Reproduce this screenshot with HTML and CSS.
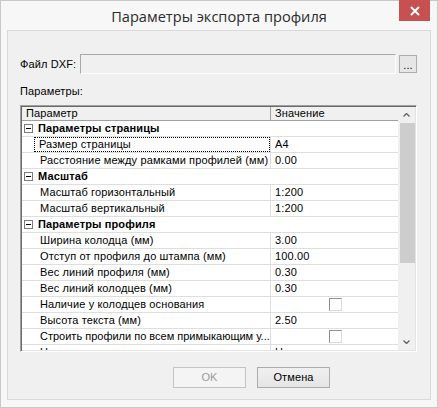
FILE: index.html
```html
<!DOCTYPE html>
<html lang="ru">
<head>
<meta charset="utf-8">
<title>Параметры экспорта профиля</title>
<link rel="stylesheet" href="styles.css">
</head>
<body>
<div class="window">
  <div class="titlebar">
    <span class="title">Параметры экспорта профиля</span>
    <div class="close">
      <svg width="10" height="10" viewBox="0 0 10 10"><path d="M1 1 L9 9 M9 1 L1 9" stroke="#fff" stroke-width="2" fill="none"/></svg>
    </div>
  </div>
  <div class="panel">
    <div class="file-row">
      <span class="file-label">Файл DXF:</span>
      <div class="file-input"></div>
      <div class="browse">...</div>
    </div>
    <div class="params-label">Параметры:</div>
    <div class="grid-box">
      <div class="grid">
        <div class="grid-head">
          <div class="c1">Параметр</div>
          <div class="c2">Значение</div>
        </div>
        <div class="row group"><span class="toggle"></span>Параметры страницы</div>
        <div class="row"><div class="c1"><span class="focus">Размер страницы</span></div><div class="c2">A4</div></div>
        <div class="row"><div class="c1"><span class="txt">Расстояние между рамками профилей (мм)</span></div><div class="c2">0.00</div></div>
        <div class="row group"><span class="toggle"></span>Масштаб</div>
        <div class="row"><div class="c1"><span class="txt">Масштаб горизонтальный</span></div><div class="c2">1:200</div></div>
        <div class="row"><div class="c1"><span class="txt">Масштаб вертикальный</span></div><div class="c2">1:200</div></div>
        <div class="row group"><span class="toggle"></span>Параметры профиля</div>
        <div class="row"><div class="c1"><span class="txt">Ширина колодца (мм)</span></div><div class="c2">3.00</div></div>
        <div class="row"><div class="c1"><span class="txt">Отступ от профиля до штампа (мм)</span></div><div class="c2">100.00</div></div>
        <div class="row"><div class="c1"><span class="txt">Вес линий профиля (мм)</span></div><div class="c2">0.30</div></div>
        <div class="row"><div class="c1"><span class="txt">Вес линий колодцев (мм)</span></div><div class="c2">0.30</div></div>
        <div class="row"><div class="c1"><span class="txt">Наличие у колодцев основания</span></div><div class="c2 center"><span class="check"></span></div></div>
        <div class="row"><div class="c1"><span class="txt">Высота текста (мм)</span></div><div class="c2">2.50</div></div>
        <div class="row"><div class="c1"><span class="txt tight">Строить профили по всем примыкающим у...</span></div><div class="c2 center"><span class="check"></span></div></div>
        <div class="row"><div class="c1"><span class="txt">Направление построения</span></div><div class="c2">Нет</div></div>
      </div>
      <div class="vscroll">
        <div class="sb-btn">
          <svg width="7" height="4" viewBox="0 0 7 4"><path d="M0.5 3.5 L3.5 0.5 L6.5 3.5" stroke="#606060" stroke-width="1.3" fill="none"/></svg>
        </div>
        <div class="sb-thumb"></div>
        <div class="sb-track"></div>
        <div class="sb-btn">
          <svg width="7" height="4" viewBox="0 0 7 4"><path d="M0.5 0.5 L3.5 3.5 L6.5 0.5" stroke="#606060" stroke-width="1.3" fill="none"/></svg>
        </div>
      </div>
    </div>
    <div class="buttons">
      <div class="btn disabled">OK</div>
      <div class="btn">Отмена</div>
    </div>
  </div>
</div>
</body>
</html>
```
FILE: styles.css
```css
* { box-sizing: border-box; }
html, body { margin: 0; padding: 0; }
body {
  width: 438px;
  height: 408px;
  background: #f7f7f7;
  font-family: "Liberation Sans", Arial, sans-serif;
  font-size: 11px;
  letter-spacing: 0.12px;
  color: #000;
  overflow: hidden;
}
.window {
  width: 438px;
  height: 408px;
  border: 1px solid #c8c8c8;
  background: #f7f7f7;
}
.titlebar {
  position: relative;
  height: 29px;
  display: flex;
  align-items: center;
  justify-content: center;
}
.title {
  font-family: "Open Sans", "Noto Sans", sans-serif;
  font-size: 14.6px;
  letter-spacing: 0;
  color: #2b2b2b;
}
.close {
  position: absolute;
  top: -1px;
  right: 7px;
  width: 31px;
  height: 21px;
  background: #c75050;
  display: flex;
  align-items: center;
  justify-content: center;
}
.panel {
  margin-left: 6px;
  width: 424px;
  height: 370px;
  background: #f0f0f0;
  border: 1px solid #d9d9d9;
  padding-left: 12px;
}
.file-row {
  display: flex;
  align-items: center;
  height: 20px;
  margin-top: 23px;
}
.file-label {
  width: 60px;
  white-space: nowrap;
}
.file-input {
  width: 316px;
  height: 20px;
  border: 1px solid;
  border-color: #a9a9a9 #fdfdfd #fdfdfd #a9a9a9;
  background: #f0f0f0;
}
.browse {
  margin-left: 3px;
  width: 18px;
  height: 18px;
  border: 1px solid #adadad;
  background: #e6e6e6;
  font-size: 11px;
  line-height: 18px;
  text-align: center;
}
.params-label {
  margin-top: 10px;
  height: 14px;
  line-height: 14px;
}
.grid-box {
  margin-top: 7px;
  width: 397px;
  height: 247px;
  border: 1px solid;
  border-color: #a0a0a0 #ffffff #ffffff #a0a0a0;
  box-shadow: inset 1px 1px 0 #696969, inset -1px -1px 0 #e3e3e3;
  padding: 1px;
  display: flex;
}
.grid {
  flex: 1;
  background: #fff;
  overflow: hidden;
}
.grid-head {
  display: flex;
  height: 14px;
  background: #f0f0f0;
  border-bottom: 1px solid #a0a0a0;
  line-height: 13px;
}
.grid-head .c1 {
  width: 249px;
  padding-left: 4px;
  border-right: 1px solid #a0a0a0;
}
.grid-head .c2 {
  flex: 1;
  padding-left: 4px;
}
.row {
  display: flex;
  height: 16px;
  border-bottom: 1px solid #dedede;
  line-height: 15px;
  white-space: nowrap;
}
.row .c1 {
  width: 249px;
  padding-left: 12px;
  border-right: 1px solid #dedede;
  display: flex;
  overflow: hidden;
}
.row .c2 {
  flex: 1;
  padding-left: 4px;
}
.row .c2.center {
  display: flex;
  justify-content: center;
  align-items: center;
  padding-left: 0;
}
.txt {
  padding-left: 6px;
}
.txt.tight {
  letter-spacing: 0;
}
.focus {
  flex: 1;
  padding-left: 5px;
  outline: 1px dotted #000;
  outline-offset: -1px;
}
.row.group {
  font-weight: bold;
  align-items: center;
  padding-left: 2px;
}
.toggle {
  position: relative;
  width: 9px;
  height: 9px;
  border: 1px solid #7a7a7a;
  background: #fff;
  margin-right: 5px;
}
.toggle::after {
  content: "";
  position: absolute;
  left: 1px;
  top: 3px;
  width: 5px;
  height: 1px;
  background: #000;
}
.check {
  width: 13px;
  height: 13px;
  border: 1px solid;
  border-color: #8e8e8e #dcdcdc #dcdcdc #8e8e8e;
  background: #fff;
  margin-left: 2px;
}
.vscroll {
  width: 17px;
  background: #f0f0f0;
  display: flex;
  flex-direction: column;
}
.sb-btn {
  height: 16px;
  display: flex;
  align-items: center;
  justify-content: center;
}
.sb-thumb {
  height: 140px;
  margin-left: 2px;
  background: #cdcdcd;
}
.sb-track {
  flex: 1;
}
.buttons {
  display: flex;
  margin-top: 15px;
  margin-left: 153px;
  gap: 11px;
}
.btn {
  width: 73px;
  height: 21px;
  border: 1px solid #acacac;
  background: linear-gradient(#f0f0f0, #e5e5e5);
  text-align: center;
  line-height: 19px;
}
.btn.disabled {
  border-color: #c4c4c4;
  background: #f4f4f4;
  color: #9a9a9a;
}
```
